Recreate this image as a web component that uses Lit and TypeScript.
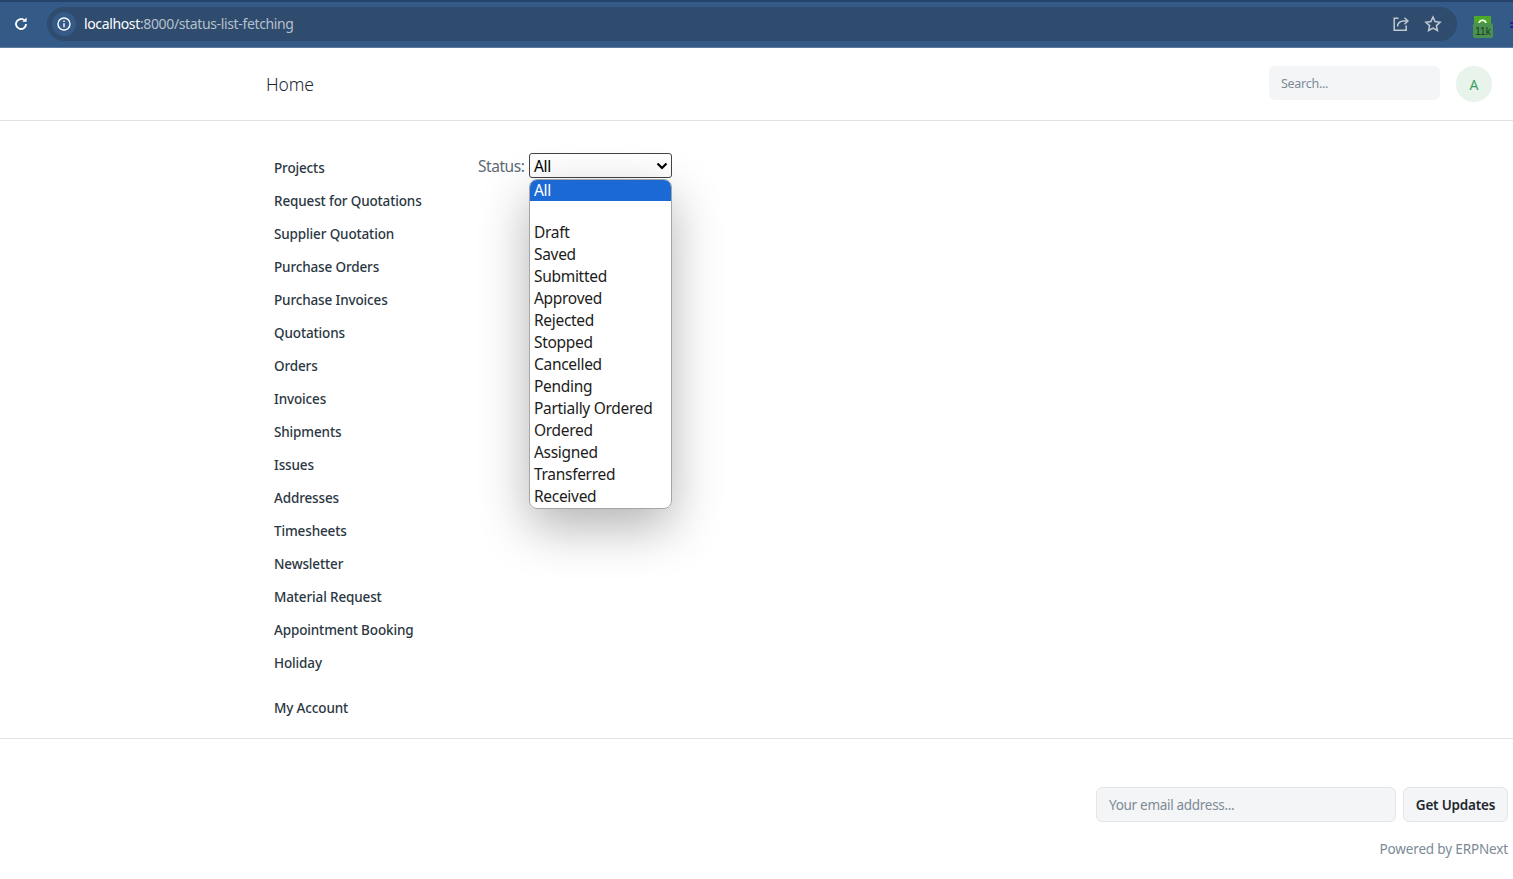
import { LitElement, html, css } from "lit";
import { customElement } from "lit/decorators.js";

const NAV = ["Projects","Request for Quotations","Supplier Quotation","Purchase Orders","Purchase Invoices","Quotations","Orders","Invoices","Shipments","Issues","Addresses","Timesheets","Newsletter","Material Request","Appointment Booking","Holiday"];
const OPTS = ["All","","Draft","Saved","Submitted","Approved","Rejected","Stopped","Cancelled","Pending","Partially Ordered","Ordered","Assigned","Transferred","Received"];

@customElement("app-root")
export class AppRoot extends LitElement {
  static styles = css`
    :host { display: block; font-family: "Noto Sans", "Open Sans", sans-serif; color: #1f272e; background: #fff; height: 879px; overflow: hidden; }
    * { box-sizing: border-box; }
    .chrome { height: 48px; background: #345b88; border-bottom: 1px solid #5b7ba0; position: relative; display: flex; align-items: center; padding: 7px 0 6px 0; }
    .tabstrip { position: absolute; left: 0; right: 0; top: 0; height: 7px; background: #345b88; border-top: 2px solid #25426a; }
    .reload { width: 47px; display: flex; justify-content: center; padding-right: 5px; }
    .omni { width: 1410px; height: 34px; border-radius: 17px; background: #2f4b6d; display: flex; align-items: center; padding: 0 15px 0 3px; }
    .infow { width: 24px; height: 24px; border-radius: 50%; background: #345b88; display: flex; align-items: center; justify-content: center; margin-right: 8px; margin-left: 2px; }
    .url { font-size: 14px; letter-spacing: -0.36px; color: #b4c0ce; flex: 1; margin-top: -1px; }
    .url b { font-weight: 400; color: #fff; }
    .omni svg.a { margin-right: 15px; }
    .ext { position: absolute; left: 1472px; top: 15px; width: 22px; height: 23px; }
    .extbar { position: absolute; left: 1510px; top: 22px; width: 3px; height: 6px; }
    .navbar { height: 73px; border-bottom: 1px solid #e2e2e2; display: flex; align-items: center; padding: 0 21px 0 266px; }
    .home { font-size: 17.5px; font-weight: 300; letter-spacing: -0.12px; flex: 1; color: #192734; }
    .search { width: 171px; height: 34px; border-radius: 6px; background: #f4f5f6; font-size: 12.5px; letter-spacing: -0.28px; color: #7c8a97; display: flex; align-items: center; padding-left: 12px; margin: -2px 16px 0 0; }
    .avatar { width: 36px; height: 36px; border-radius: 50%; background: #e8f3ec; color: #38a160; font-size: 14px; display: flex; align-items: center; justify-content: center; }
    .content { height: 618px; border-bottom: 1px solid #e2e2e2; display: flex; padding: 31px 0 0 274px; }
    .side { width: 204px; list-style: none; margin: 0; padding: 0; }
    .side li { height: 33px; line-height: 33px; font-size: 13.5px; letter-spacing: -0.14px; font-weight: 500; color: #2b3742; white-space: nowrap; }
    .side li.acct { margin-top: 12px; }
    .field { display: flex; align-items: flex-start; position: relative; height: 30px; }
    .label { font-size: 15.5px; letter-spacing: -0.45px; color: #5d6a75; width: 51px; line-height: 28px; }
    .select { width: 143px; height: 25px; margin-top: 1px; border: 1px solid #444; border-radius: 3px; background: #fff; display: flex; align-items: center; justify-content: space-between; padding: 0 3px 0 4px; font-size: 15.5px; letter-spacing: -0.3px; color: #000; }
    .menu { position: absolute; left: 51px; top: 27px; width: 143px; height: 330px; background: #fff; border: 1px solid #a5a5a5; border-radius: 8px; overflow: hidden; z-index: 2; color: #1c1c1c; }
    .shadow { position: absolute; left: 51px; top: 27px; width: 143px; height: 330px; border-radius: 8px; box-shadow: 0 18px 50px rgba(0,0,0,.3); z-index: 1; }
    .opt { height: 22px; line-height: 22px; padding-left: 4px; font-size: 15.5px; letter-spacing: -0.3px; white-space: nowrap; }
    .opt.sel { height: 21px; line-height: 21px; background: #1a69d4; color: #fff; }
    .opt.blank { height: 20px; }
    .footer { padding: 48px 5px 0 0; display: flex; flex-direction: column; align-items: flex-end; }
    .sub { display: flex; gap: 7px; }
    .email { width: 300px; height: 35px; background: #f4f5f6; border: 1px solid #e4e6e8; border-radius: 6px; font-size: 13.5px; letter-spacing: -0.3px; color: #7c8a97; display: flex; align-items: center; padding-left: 12px; }
    .btn { width: 105px; height: 35px; background: #f4f5f6; border: 1px solid #e4e6e8; border-radius: 6px; font-size: 13.5px; letter-spacing: -0.2px; font-weight: 600; color: #1f272e; display: flex; align-items: center; justify-content: center; }
    .powered { margin-top: 17px; font-size: 13.5px; letter-spacing: -0.15px; color: #7c8a97; line-height: 20px; }
  `;

  render() {
    return html`
      <div class="chrome">
        <div class="tabstrip"></div>
        <div class="reload">
          <svg width="16" height="16" viewBox="0 0 16 16" fill="none" stroke="#fff" stroke-width="1.8"><path d="M13 8a5 5 0 1 1-1.5-3.6"/><path d="M13.6 1.6v4.2H9.4z" fill="#fff" stroke="none"/></svg>
        </div>
        <div class="omni">
          <div class="infow">
            <svg width="14" height="14" viewBox="0 0 14 14" fill="none" stroke="#fff" stroke-width="1.4"><circle cx="7" cy="7" r="6"/><path d="M7 6.2v4M7 3.6v1.5"/></svg>
          </div>
          <div class="url"><b>localhost</b>:8000/status-list-fetching</div>
          <svg class="a" width="16" height="16" viewBox="0 0 16 16" fill="none" stroke="#c2c9d2" stroke-width="1.5"><path d="M5.5 2.2H1.2v12h12V9.5"/><path d="M4.5 10.5c0-3.5 3-5.5 6-5.5h4"/><path d="M11.5 1.8 15 5l-3.5 3.2"/></svg>
          <svg width="18" height="18" viewBox="0 0 18 18" fill="none" stroke="#c2c9d2" stroke-width="1.5"><path d="M9 2l2.1 4.6 5 .6-3.7 3.4 1 4.9L9 13l-4.4 2.5 1-4.9-3.7-3.4 5-.6z"/></svg>
        </div>
        <svg class="ext" viewBox="0 0 22 23">
          <rect x="2" y="1" width="17" height="8" fill="#4ea82a"/>
          <path d="M7 8a3.6 3.6 0 0 1 7 0" fill="none" stroke="#fff" stroke-width="1.6"/>
          <rect x="1" y="8" width="20" height="15" rx="2.5" fill="#4b9150"/>
          <text x="11" y="20" font-size="10" font-family="Liberation Sans" text-anchor="middle" fill="#1c3a20">11k</text>
        </svg>
        <svg class="extbar" viewBox="0 0 3 6"><rect width="3" height="2" fill="#2a1f9a"/><rect y="4" width="3" height="2" fill="#2a1f9a"/></svg>
      </div>
      <div class="navbar">
        <div class="home">Home</div>
        <div class="search">Search...</div>
        <div class="avatar">A</div>
      </div>
      <div class="content">
        <ul class="side">
          ${NAV.map((n) => html`<li>${n}</li>`)}
          <li class="acct">My Account</li>
        </ul>
        <div class="field">
          <div class="label">Status:</div>
          <div class="select">
            <span>All</span>
            <svg width="12" height="8" viewBox="0 0 12 8" fill="none" stroke="#000" stroke-width="2.2"><path d="M1.5 1.5 6 6l4.5-4.5"/></svg>
          </div>
          <div class="shadow"></div>
          <div class="menu">
            ${OPTS.map((o, i) => html`<div class="opt ${i === 0 ? "sel" : i === 1 ? "blank" : ""}">${o}</div>`)}
          </div>
        </div>
      </div>
      <div class="footer">
        <div class="sub">
          <div class="email">Your email address...</div>
          <div class="btn">Get Updates</div>
        </div>
        <div class="powered">Powered by ERPNext</div>
      </div>
    `;
  }
}
